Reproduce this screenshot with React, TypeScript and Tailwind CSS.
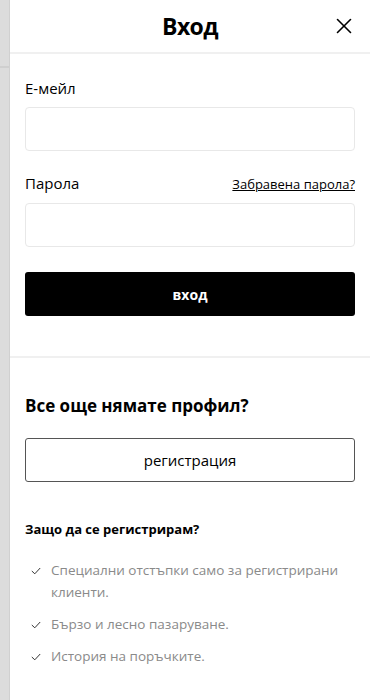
import { X } from 'lucide-react'

const REASONS = [
  'Специални отстъпки само за регистрирани клиенти.',
  'Бързо и лесно пазаруване.',
  'История на поръчките.',
]

function Check() {
  return (
    <svg width="10" height="8" viewBox="0 0 10 8" fill="none" className="mt-[8px] shrink-0">
      <path d="M0.8 4 L3.8 6.8 L9.2 1" stroke="#333" strokeWidth="1" />
    </svg>
  )
}

export default function App() {
  return (
    <div className="flex w-[370px] h-[700px] bg-white text-black" style={{ fontFamily: '"Open Sans", "Noto Sans", sans-serif' }}>
      {/* backdrop strip */}
      <div className="w-[10px] flex flex-col bg-[#dcdcdc] border-r border-[#d0d0d0]">
        <div className="h-[66px]" />
        <div className="h-[2px] bg-[#cfcfcf]" />
      </div>

      <div className="flex-1 flex flex-col">
        {/* Header */}
        <div className="relative h-[54px] flex items-center justify-center border-b-2 border-[#f0f0f0]">
          <h2 className="text-[23px] font-bold tracking-tight">Вход</h2>
          <button className="absolute right-[13px] top-[13px]">
            <X size={26} strokeWidth={1.5} />
          </button>
        </div>

        {/* Login form */}
        <div className="px-[15px] pt-[24px] pb-[40px] border-b-2 border-[#f0f0f0]">
          <label className="block text-[15px] leading-[20px]">Е-мейл</label>
          <input className="mt-[9px] w-full h-[44px] rounded-[4px] border border-[#e8e8e8] outline-none" />

          <div className="mt-[22px] flex items-end justify-between">
            <label className="text-[15px] leading-[20px]">Парола</label>
            <a className="text-[13px] leading-[18px] underline">Забравена парола?</a>
          </div>
          <input type="password" className="mt-[10px] w-full h-[44px] rounded-[4px] border border-[#e8e8e8] outline-none" />

          <button className="mt-[25px] w-full h-[44px] rounded-[3px] bg-black text-white text-[14px] font-bold">
            вход
          </button>
        </div>

        {/* Register */}
        <div className="px-[15px] pt-[36px]">
          <h3 className="text-[17px] leading-[24px] font-bold">Все още нямате профил?</h3>
          <button className="mt-[20px] w-full h-[44px] rounded-[3px] border border-[#555] text-[15px]">
            регистрация
          </button>

          <h4 className="mt-[37px] text-[13px] leading-[20px] font-bold">Защо да се регистрирам?</h4>
          <ul className="mt-[20px] flex flex-col gap-[10px]">
            {REASONS.map(r => (
              <li key={r} className="flex gap-[10px] pl-[6px]">
                <Check />
                <span className="text-[13.5px] leading-[22px] text-[#8a8a8a]">{r}</span>
              </li>
            ))}
          </ul>
        </div>
      </div>
    </div>
  )
}
